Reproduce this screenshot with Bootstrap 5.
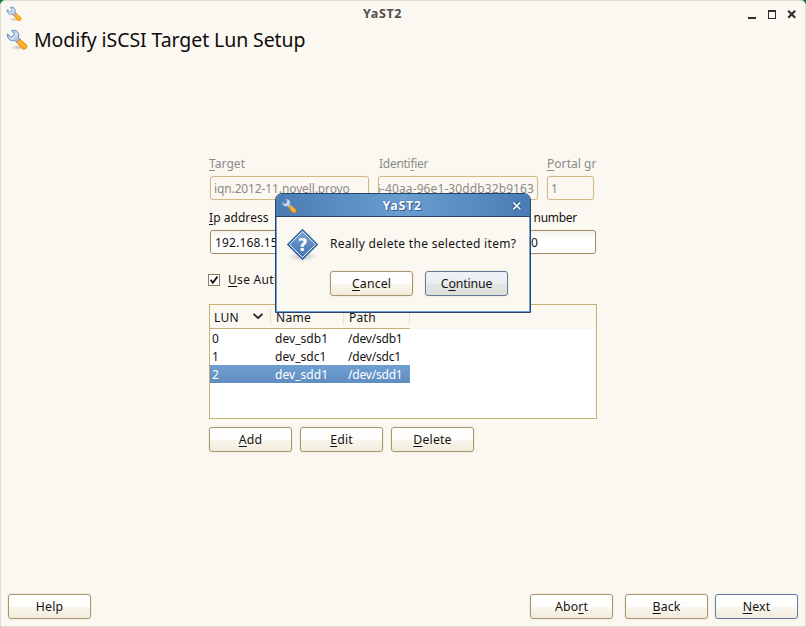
<!DOCTYPE html>
<html lang="en">
<head>
<meta charset="utf-8">
<meta name="viewport" content="width=device-width, initial-scale=1">
<title>YaST2</title>
<link href="https://cdn.jsdelivr.net/npm/bootstrap@5.3.0/dist/css/bootstrap.min.css" rel="stylesheet">
<style>
html,body{height:100%}
body{margin:0;background:#067a38;font-family:"Noto Sans","Open Sans",sans-serif;font-size:12px;line-height:18px;letter-spacing:.3px;color:#141312;overflow:hidden;white-space:nowrap}
svg{display:block;flex:none}
u{text-decoration:underline;text-decoration-thickness:1px;text-underline-offset:2px;text-decoration-skip-ink:none}
.window{width:806px;height:627px;background:#fbf8f1;border:1px solid #dedbd5;border-radius:5px 5px 0 0}
.titlebar{height:25px;padding:0 8px 0 5px}
.caption{font-size:12.5px;font-weight:700;letter-spacing:.6px;color:#504e4b;padding-right:4px}
.heading{font-size:19.5px;line-height:28px;font-weight:400;letter-spacing:-.09px;color:#0d0c0b;margin:0 0 0 6px}
.head-row{height:28px;padding-left:5px}
.head-row svg{margin-top:-1px}
.form-area{width:388px;margin:101px 0 0 208px}
.disabled-text{color:#8c8a87}
.snug{letter-spacing:.05px}
.tight{letter-spacing:-.28px}
.field{height:24px;line-height:22px;padding:1px 3px 0;letter-spacing:-.12px;border:1px solid #a18d62;border-radius:3px;background:linear-gradient(#f6f3ee,#fff 9px);color:#141312;box-shadow:0 0 0 1px #f7f3ea}
.field.off{border-color:#d0b987;background:#fbf8f1;color:#8c8a87}
.field.tail{display:flex;justify-content:flex-end;letter-spacing:.1px;padding-right:3px;padding-left:0;overflow:hidden}
.field.address{letter-spacing:.15px;padding-left:4px}
.tool-btn{--bs-btn-padding-x:0;--bs-btn-padding-y:0;--bs-btn-font-size:12.3px;--bs-btn-line-height:22px;--bs-btn-color:#141312;--bs-btn-border-color:#a8966d;--bs-btn-border-radius:3px;--bs-btn-hover-color:#141312;width:83px;height:25px;padding-top:1px;letter-spacing:.15px;background:linear-gradient(#fff,#fefdfb 50%,#f9f6ed 52%,#f1ecdc);box-shadow:0 0 0 1px #f4efe3}
.tool-btn.default{--bs-btn-border-color:#637da8}
.tool-btn.focused{--bs-btn-border-color:#637a9c;letter-spacing:-.15px;background:linear-gradient(#eef3f8,#eaeff2 48%,#e2e5e4 52%,#dedfd8)}
.check{width:12px;height:12px;background:#fff;border:1px solid #8f7f5a}
.lun-list{width:388px;height:115px;border:1px solid #c5b078;background:#fff}
.lun-head{height:24px;background:#fbf8f1}
.lun-cols{display:grid;grid-template-columns:61px 73px 66px;width:200px}
.lun-head .lun-cols{height:24px;border-bottom:1px solid #c5b078;padding-top:4px}
.lun-head .lun-cols>div{height:16px;border-right:1px solid #ece3c6;padding-left:4px}
.lun-head .lun-cols>div:nth-child(n+2){padding-left:5px}
.lun-line{height:18px;line-height:20px;letter-spacing:-.2px}
.lun-line>span{padding-left:2px}
.lun-line>span:nth-child(n+2){padding-left:4px}
.lun-line>span:nth-child(2){letter-spacing:.05px}
.lun-line.picked{background:linear-gradient(#6f9fd2,#608dbf);color:#fff}
.dialog-win{position:absolute;left:275px;top:193px;width:256px;height:120px;background:#fbf8f1;border:1px solid #24466b;border-radius:7px 7px 0 0;box-shadow:inset 0 0 0 1px #6da0d8}
.dialog-bar{height:23px;padding:1px 7px 0 5px;background:linear-gradient(90deg,#4a7cb4,#6c9dd0 50%,#4a7cb4);border-bottom:1px solid #24466b;border-radius:6px 6px 0 0}
.dialog-bar .caption{color:#fff;text-shadow:0 0 1px #1f4672,1px 1px 0 #33608f}
.dialog-msg{padding:11px 0 0 10px}
.footer-row{padding:0 7px;margin-bottom:7px}
</style>
<script defer src="https://cdn.jsdelivr.net/npm/bootstrap@5.3.0/dist/js/bootstrap.bundle.min.js"></script>
</head>
<body>
<svg width="0" height="0" class="position-absolute">
  <defs>
    <linearGradient id="steel" x1="0" y1="0" x2="1" y2="1"><stop offset="0" stop-color="#7fa6d8"/><stop offset=".5" stop-color="#d5e2f3"/><stop offset="1" stop-color="#7896c4"/></linearGradient>
    <radialGradient id="shade"><stop offset="0" stop-color="#777" stop-opacity=".4"/><stop offset="1" stop-color="#777" stop-opacity="0"/></radialGradient>
    <linearGradient id="diamond" x1="0" y1="0" x2="0" y2="1"><stop offset="0" stop-color="#7aa6d9"/><stop offset="1" stop-color="#3f70ab"/></linearGradient>
    <symbol id="wrench" viewBox="0 0 22 22">
      <ellipse cx="12" cy="18.5" rx="9" ry="2.5" fill="url(#shade)"/>
      <path d="M7.2 1.3 C10.5 1 13.3 3.5 12.7 7 L12.4 8.3 L14.8 10.8 L11.4 14 L8.7 11.4 C5.5 12.5 1.8 10.5 1.4 6.6 L1.6 4.8 L4.6 7.7 L7.5 7.2 L8.2 4.4 L5.5 1.8 Z" fill="url(#steel)" stroke="#5c85bd" stroke-width=".9"/>
      <path d="M10.9 13.1 L14.2 10.2 Q15.2 11.9 17 12.8 L20.4 15.8 Q21.8 17.5 20 19.5 Q17.8 21.1 16.1 19.5 L13.1 16.7 Q12.7 14.3 10.9 13.1Z" fill="#fba51c" stroke="#e78712" stroke-width=".8"/>
      <path d="M13.4 12.6 L18.8 18" stroke="#ffd05c" stroke-width="1.4" stroke-dasharray="1.3 .8" fill="none"/>
    </symbol>
  </defs>
</svg>

<main class="window d-flex flex-column position-relative">
  <header class="titlebar d-flex align-items-center flex-shrink-0">
    <svg width="16" height="16"><use href="#wrench"/></svg>
    <div class="caption flex-grow-1 text-center">YaST2</div>
    <svg width="50" height="12" viewBox="0 0 50 12" stroke="#2f2e2c" fill="none" shape-rendering="crispEdges">
      <path d="M1 10H9" stroke-width="2"/>
      <path d="M21.5 3v7.5h7V2M21 3h8" stroke-width="1"/><path d="M21 3H29" stroke-width="2"/>
      <path d="M41.2 2.7l7 7m0-7l-7 7" stroke-width="2.1" shape-rendering="auto"/>
    </svg>
  </header>

  <div class="head-row d-flex align-items-center flex-shrink-0">
    <svg width="22" height="22"><use href="#wrench"/></svg>
    <h1 class="heading">Modify iSCSI Target Lun Setup</h1>
  </div>

  <section class="form-area flex-shrink-0">
    <div class="d-flex disabled-text snug">
      <div style="width:169px"><u>T</u>arget</div>
      <div class="tight" style="width:169px;padding-left:1px">Identi<u>f</u>ier</div>
      <div><u>P</u>ortal gr</div>
    </div>
    <div class="d-flex" style="margin-top:3px;padding-left:1px">
      <div class="field off" style="width:159px">iqn.2012-11.novell.provo</div>
      <div class="field off tail" style="width:160px;margin-left:9px">5-40aa-96e1-30ddb32b9163</div>
      <div class="field off" style="width:47px;margin-left:9px">1</div>
    </div>
    <div class="d-flex" style="margin-top:9px">
      <div class="snug" style="width:272px"><u>I</u>p address</div>
      <div class="text-end tight" style="width:96px"><u>P</u>ort number</div>
    </div>
    <div class="d-flex gap-2" style="margin-top:3px;padding:0 1px">
      <div class="field address" style="width:260px">192.168.15</div>
      <div class="field flex-grow-1" style="padding-left:52px">0</div>
    </div>
    <div class="d-flex align-items-center" style="margin-top:16px;margin-left:-1px">
      <div class="check"><svg width="10" height="10" viewBox="0 0 11 11"><path d="M1.8 5.2L4.2 8.6L9.3 1.8" fill="none" stroke="#111" stroke-width="2"/></svg></div>
      <div style="margin-left:8px;padding-top:1px"><u>U</u>se Authentication</div>
    </div>
    <div class="lun-list" style="margin-top:15px">
      <div class="lun-head">
        <div class="lun-cols">
          <div class="d-flex justify-content-between" style="padding-right:6px"><span>LUN</span><svg style="margin-top:3px" width="12" height="9" viewBox="0 0 12 9"><path d="M1.5 1.8L6 6L10.5 1.8" fill="none" stroke="#222" stroke-width="1.8"/></svg></div>
          <div>Name</div><div>Path</div>
        </div>
      </div>
      <div class="lun-line lun-cols"><span>0</span><span>dev_sdb1</span><span>/dev/sdb1</span></div>
      <div class="lun-line lun-cols"><span>1</span><span>dev_sdc1</span><span>/dev/sdc1</span></div>
      <div class="lun-line lun-cols picked"><span>2</span><span>dev_sdd1</span><span>/dev/sdd1</span></div>
    </div>
    <div class="d-flex gap-2 mt-2">
      <button class="btn tool-btn"><u>A</u>dd</button>
      <button class="btn tool-btn"><u>E</u>dit</button>
      <button class="btn tool-btn"><u>D</u>elete</button>
    </div>
  </section>

  <footer class="footer-row d-flex mt-auto">
    <button class="btn tool-btn me-auto">Help</button>
    <button class="btn tool-btn" style="margin-right:12px">Abo<u>r</u>t</button>
    <button class="btn tool-btn" style="margin-right:7px"><u>B</u>ack</button>
    <button class="btn tool-btn default"><u>N</u>ext</button>
  </footer>
</main>

<div class="dialog-win" role="dialog">
  <div class="dialog-bar d-flex align-items-center">
    <svg width="16" height="16"><use href="#wrench"/></svg>
    <div class="caption flex-grow-1 text-center">YaST2</div>
    <svg width="12" height="12" viewBox="0 0 12 12"><path d="M2.3 2.3l7 7m0-7l-7 7" stroke="#2d5788" stroke-width="3.6"/><path d="M2.3 2.3l7 7m0-7l-7 7" stroke="#e8f0f9" stroke-width="1.8"/></svg>
  </div>
  <div class="dialog-msg d-flex">
    <svg width="32" height="34" viewBox="-.5 -.5 32 34">
      <ellipse cx="16" cy="28" rx="15" ry="5" fill="url(#shade)"/>
      <path d="M16 1.2L30.8 16L16 30.8L1.2 16Z" fill="url(#diamond)" stroke="#3567a5" stroke-width="1.4" stroke-linejoin="round"/>
      <path d="M16 3L29 16L16 29L3 16Z" fill="none" stroke="#e4eef9" stroke-width="1"/>
      <text x="16.3" y="22" text-anchor="middle" font-family="DejaVu Sans" font-weight="700" font-size="17" letter-spacing="0" fill="#fff">?</text>
    </svg>
    <div style="padding:7px 0 0 12px">Really delete the selected item?</div>
  </div>
  <div class="d-flex" style="margin:9px 0 0 54px;gap:12px">
    <button class="btn tool-btn"><u>C</u>ancel</button>
    <button class="btn tool-btn focused">C<u>o</u>ntinue</button>
  </div>
</div>
</body>
</html>
